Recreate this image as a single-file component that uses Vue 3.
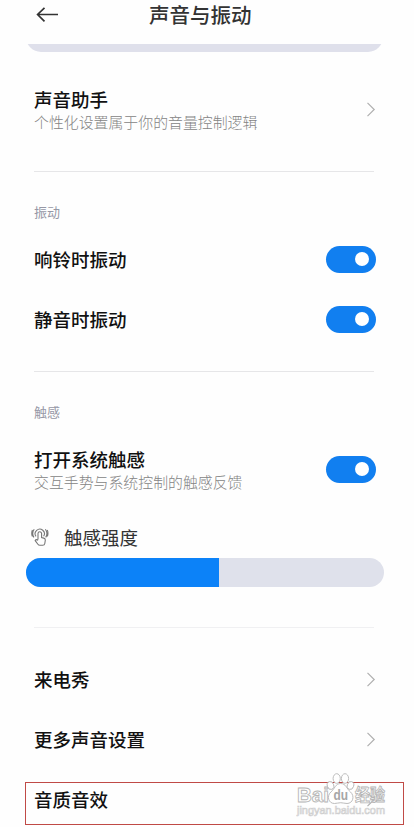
<template>
  <div class="page">
    <header class="header">
      <svg class="back" width="24" height="18" viewBox="0 0 24 18">
        <path d="M23 9.5H2.6M9.5 2.8L2.6 9.5l6.9 6.9" />
      </svg>
      <h1 class="header-title">声音与振动</h1>
    </header>

    <!-- 音量条(滚动后只露出底部) -->
    <div class="volume-clip">
      <div class="volume-track"></div>
    </div>

    <div class="row assistant">
      <div class="row-text">
        <div class="label">声音助手</div>
        <div class="desc">个性化设置属于你的音量控制逻辑</div>
      </div>
      <svg class="chevron" width="10" height="16" viewBox="0 0 10 16">
        <path d="M1.5 1.8L8.2 8.5L1.5 15.2" />
      </svg>
    </div>

    <!-- 振动 -->
    <div class="divider"></div>
    <div class="section-title">振动</div>
    <div v-for="item in vibrations" :key="item.name" class="row">
      <div class="label">{{ item.name }}</div>
      <div class="switch" :class="{ on: item.on }" @click="item.on = !item.on"><i></i></div>
    </div>

    <!-- 触感 -->
    <div class="divider haptic-divider"></div>
    <div class="section-title">触感</div>
    <div class="row haptic">
      <div class="row-text">
        <div class="label">打开系统触感</div>
        <div class="desc">交互手势与系统控制的触感反馈</div>
      </div>
      <div class="switch" :class="{ on: hapticOn }" @click="hapticOn = !hapticOn"><i></i></div>
    </div>
    <div class="strength">
      <svg class="touch" width="18" height="20" viewBox="0 0 18 20">
        <path d="M7 12.4V6.6a1.8 1.8 0 0 1 3.6 0v4l2.2.5q1.7.5 1.5 2.2l-.5 3.2q-.3 1.8-2.1 1.8H8.8q-1.2 0-1.9-1L4.2 13.6q1-1.8 2.8-.2" />
        <path d="M5 9.4a4.6 4.6 0 1 1 7.6-.1M2.9 10.4a7.4 7.4 0 0 1 .3-8.2M14.4 2.2a7.4 7.4 0 0 1 .3 8.2M1.3 9.4a9 9 0 0 1 .1-6.4M16.3 3a9 9 0 0 1 .1 6.4" />
      </svg>
      <span>触感强度</span>
    </div>
    <div class="slider">
      <div class="slider-fill" :style="{ width: strength + '%' }"></div>
    </div>

    <div class="divider more-divider"></div>
    <div v-for="(name, index) in links" :key="name" class="row">
      <div class="label">{{ name }}</div>
      <svg class="chevron" width="10" height="16" viewBox="0 0 10 16">
        <path d="M1.5 1.8L8.2 8.5L1.5 15.2" />
      </svg>
      <div v-if="index === links.length - 1" class="highlight"></div>
    </div>

    <!-- 水印 -->
    <svg class="watermark" width="118" height="60" viewBox="0 0 118 60">
      <g class="wm-line">
        <text class="wm-logo" x="1" y="35" textLength="32" lengthAdjust="spacingAndGlyphs">Bai</text>
        <text class="wm-cn" x="59" y="34" textLength="30" lengthAdjust="spacingAndGlyphs">经验</text>
        <ellipse cx="34.5" cy="18.5" rx="3.2" ry="4" transform="rotate(-18 34.5 18.5)" />
        <ellipse cx="40.7" cy="11.5" rx="3.6" ry="4.8" />
        <ellipse cx="49" cy="11.5" rx="3.6" ry="4.8" />
        <ellipse cx="54.5" cy="18.5" rx="3.2" ry="4" transform="rotate(18 54.5 18.5)" />
        <path d="M44.7 16.5c5.3 0 6 5.500 9.800 8.500 4.500 4 2.500 11.500-3.500 11.500-2.500 0-4-.8-6.300-.8s-3.800.8-6.300.8c-6 0-8-7.500-3.500-11.500 3.800-3 4.500-8.500 9.800-8.500z" />
        <text class="wm-url" x="1" y="47" textLength="88" lengthAdjust="spacingAndGlyphs">jingyan.baidu.com</text>
      </g>
      <text class="wm-du" x="37.500" y="33" textLength="14.500" lengthAdjust="spacingAndGlyphs">du</text>
    </svg>
  </div>
</template>

<script setup>
import { ref } from "vue";

// 振动开关
const vibrations = ref([
  { name: "响铃时振动", on: true },
  { name: "静音时振动", on: true },
]);

// 触感
const hapticOn = ref(true);
const strength = ref(54);

const links = ["来电秀", "更多声音设置", "音质音效"];
</script>

<style>
body {
  margin: 0;
  background: #fefefe;
}
</style>

<style scoped>
.page {
  position: relative;
  width: 414px;
  height: 827px;
  overflow: hidden;
  background: #fefefe;
  color: #111;
  font-family: "Noto Sans CJK SC", sans-serif;
}

.header {
  display: flex;
  align-items: center;
  height: 28px;
  margin-bottom: 16px;
  padding-left: 35px;
}

.back {
  fill: none;
  stroke: #333;
  stroke-width: 1.7;
}

.header-title {
  margin: 0 0 0 90px;
  font-size: 20.5px;
  font-weight: 500;
  line-height: 28px;
  color: #333;
}

.volume-clip {
  display: flex;
  align-items: flex-end;
  height: 8px;
  margin: 0 31px 0 26px;
  overflow: hidden;
}

.volume-track {
  flex: 1;
  flex-shrink: 0;
  height: 30px;
  border-radius: 15px;
  background: #dfe0eb;
}

.row {
  position: relative;
  display: flex;
  align-items: center;
  justify-content: space-between;
  height: 60px;
  padding: 0 38px 0 34px;
}

.assistant {
  height: 115px;
  padding-bottom: 2px;
  box-sizing: border-box;
}

.label {
  font-size: 18.5px;
  font-weight: 500;
  line-height: 24px;
}

.assistant .row-text {
  padding-top: 2px;
}

.desc {
  font-size: 14.9px;
  font-weight: 300;
  line-height: 21px;
  color: #848484;
}

.chevron {
  fill: none;
  stroke: #b0b0b0;
  stroke-width: 1.2;
}

.divider {
  height: 1px;
  margin: 4px 40px 0 34px;
  background: #e6e6e8;
}

.section-title {
  margin: 30px 0 7px 34px;
  font-size: 13px;
  line-height: 20px;
  color: #9698a6;
}

.switch {
  width: 50px;
  height: 27px;
  box-sizing: border-box;
  padding: 6.5px 7px;
  border-radius: 14px;
  background: #dfe1eb;
}

.switch.on {
  display: flex;
  justify-content: flex-end;
  background: #117ff0;
}

.switch i {
  display: block;
  width: 14px;
  height: 14px;
  border-radius: 50%;
  background: #fff;
}

.haptic-divider {
  margin-top: 22px;
}

.haptic {
  height: 94px;
  box-sizing: border-box;
  padding-bottom: 14px;
}

.strength {
  display: flex;
  align-items: center;
  height: 30px;
  margin-top: -1px;
  padding-left: 31px;
  font-size: 18.5px;
  color: #333;
}

.strength span {
  margin-left: 15px;
}

.touch {
  fill: none;
  stroke: #777;
  stroke-width: 1.1;
}

.slider {
  height: 29px;
  margin: 6px 30px 0 26px;
  overflow: hidden;
  border-radius: 15px;
  background: #dfe1eb;
}

.slider-fill {
  height: 100%;
  background: #0c82f8;
}

.more-divider {
  margin-top: 40px;
  margin-bottom: 21px;
  background: #f0f0f2;
}

/* 红框标注 */
.highlight {
  position: absolute;
  top: 13px;
  left: 25px;
  width: 379px;
  height: 43px;
  box-sizing: border-box;
  border: 1px solid #c04a46;
}

.watermark {
  position: absolute;
  left: 296px;
  top: 767px;
}

.wm-line {
  fill: #fff;
  stroke: #b5b5b5;
  stroke-width: 0.9;
}

.wm-logo {
  font: bold 21px "Liberation Sans", sans-serif;
}

.wm-cn {
  font: bold 17px "Noto Sans CJK SC", sans-serif;
}

.wm-url {
  font: 11px "Liberation Sans", sans-serif;
  stroke: #cfcfcf;
  stroke-width: 0.7;
}

.wm-du {
  font: bold 14px "Liberation Sans", sans-serif;
  fill: #a6a6a6;
}
</style>
